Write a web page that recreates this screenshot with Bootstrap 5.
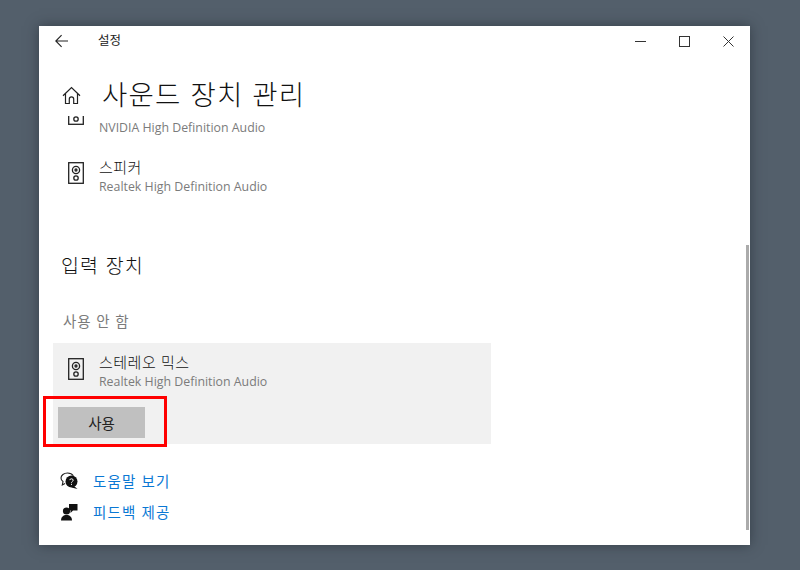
<!DOCTYPE html>
<html lang="ko">
<head>
<meta charset="utf-8">
<title>설정</title>
<link href="https://cdn.jsdelivr.net/npm/bootstrap@5.3.0/dist/css/bootstrap.min.css" rel="stylesheet">
<style>
html,body{height:100%;overflow:hidden}
body{background:#535f6b;font-family:"Open Sans","Noto Sans CJK KR",sans-serif;color:#1a1a1a;padding:26px 50px 25px 39px}
.win{width:711px;height:519px;background:#fff;box-shadow:0 0 12px rgba(30,36,44,.55);position:relative}
.tbar{height:30px;padding-left:16px}
.tbar-title{font-size:12.5px;margin-left:29px;color:#222;line-height:30px;font-weight:400}
.wbtn{width:44px;height:30px}
.head{height:60px;padding:19px 0 5px 23px}
.head h1{font-size:27.5px;font-weight:300;margin:0 0 0 21px;letter-spacing:1.2px;line-height:36px;color:#111;font-family:"Noto Sans CJK KR",sans-serif}
.scroller{height:429px;overflow:hidden;position:relative}
.dev{height:59px;padding-left:29px;gap:15px}
.dev svg{margin-bottom:7px}
.dev-first{margin-top:-28px}
.name-gap{height:20px}
.dev-name{font-size:15px;line-height:20px;color:#111;font-weight:300;letter-spacing:.5px;font-family:"Noto Sans CJK KR",sans-serif}
.dev-sub{font-size:12.35px;line-height:20px;color:#7b7b7b}
.sect{font-size:19.5px;line-height:28px;margin:45px 0 0 22px;font-weight:300;color:#111;letter-spacing:1.1px;font-family:"Noto Sans CJK KR",sans-serif}
.state{font-size:14.5px;line-height:20px;margin:32px 0 0 24px;color:#7b7b7b;letter-spacing:.8px;font-family:"Noto Sans CJK KR",sans-serif}
.panel{width:438px;height:101px;margin:12px 0 0 14px;background:#f1f1f1;position:relative}
.panel .dev{height:auto;padding:9px 0 0 15px}
.use-btn{width:87px;height:31px;margin:15px 0 0 5px;background:#c0c0c0;border:0;border-radius:0;font-size:14.5px;padding:0;color:#222;font-family:"Noto Sans CJK KR",sans-serif}
.use-btn:hover{background:#c0c0c0;color:#222}
.redbox{position:absolute;left:-10px;top:53px;width:124px;height:51px;border:3px solid #f00;pointer-events:none}
.links{margin:27px 0 0 21px;gap:11px}
.hlink{font-size:14.5px;line-height:20px;color:#0a78d4;text-decoration:none;letter-spacing:1.1px;font-family:"Noto Sans CJK KR",sans-serif}
.link-row{gap:14px}
.sbar{position:absolute;right:1px;top:129px;width:3px;height:285px;background:#ababab}
</style>
</head>
<body>
<div class="win d-flex flex-column">
  <div class="tbar d-flex align-items-center">
    <svg width="14" height="14" viewBox="0 0 14 14" fill="none" stroke="#222" stroke-width="1.1"><path d="M.8 7H13M6.6 1.2.8 7l5.8 5.8"/></svg>
    <span class="tbar-title">설정</span>
    <div class="d-flex ms-auto">
      <div class="wbtn d-flex align-items-center justify-content-center"><svg width="11" height="11" viewBox="0 0 11 11" stroke="#333"><path d="M0 5.500H11"/></svg></div>
      <div class="wbtn d-flex align-items-center justify-content-center"><svg width="11" height="11" viewBox="0 0 11 11" fill="none" stroke="#333"><rect x=".5" y=".5" width="10" height="10"/></svg></div>
      <div class="wbtn d-flex align-items-center justify-content-center"><svg width="11" height="11" viewBox="0 0 11 11" fill="none" stroke="#333"><path d="M.5.500 10.500 10.500M10.500.500 .5 10.500"/></svg></div>
    </div>
  </div>
  <div class="head d-flex align-items-center">
    <svg width="19" height="19" viewBox="0 0 19 19" fill="none" stroke="#222" stroke-width="1.2" class="mt-1"><path d="M1 9.800 9.500 1.500 18 9.800M3.500 7.500V17.500H7.300V13a2.200 2.200 0 0 1 4.400 0V17.500H15.500V7.500"/></svg>
    <h1>사운드 장치 관리</h1>
  </div>
  <div class="scroller">
    <div class="dev dev-first d-flex align-items-center">
      <svg width="16" height="22" viewBox="0 0 16 22" fill="none" stroke="#222" stroke-width="1.3"><rect x=".7" y=".7" width="14.6" height="20.6"/><circle cx="8" cy="8" r="3.600"/><circle cx="8" cy="8" r="1"/><circle cx="8" cy="16" r="2.200"/></svg>
      <div><div class="name-gap"></div><div class="dev-sub">NVIDIA High Definition Audio</div></div>
    </div>
    <div class="dev d-flex align-items-center">
      <svg width="16" height="22" viewBox="0 0 16 22" fill="none" stroke="#222" stroke-width="1.3"><rect x=".7" y=".7" width="14.6" height="20.6"/><circle cx="8" cy="8" r="3.600"/><circle cx="8" cy="8" r="1"/><circle cx="8" cy="16" r="2.200"/></svg>
      <div><div class="dev-name">스피커</div><div class="dev-sub">Realtek High Definition Audio</div></div>
    </div>
    <h2 class="sect">입력 장치</h2>
    <div class="state">사용 안 함</div>
    <div class="panel">
      <div class="dev d-flex align-items-center">
        <svg width="16" height="22" viewBox="0 0 16 22" fill="none" stroke="#222" stroke-width="1.3"><rect x=".7" y=".7" width="14.6" height="20.6"/><circle cx="8" cy="8" r="3.600"/><circle cx="8" cy="8" r="1"/><circle cx="8" cy="16" r="2.200"/></svg>
        <div><div class="dev-name">스테레오 믹스</div><div class="dev-sub">Realtek High Definition Audio</div></div>
      </div>
      <button class="btn use-btn d-block" type="button">사용</button>
      <div class="redbox"></div>
    </div>
    <div class="links d-flex flex-column">
      <div class="link-row d-flex align-items-center">
        <svg width="19" height="18" viewBox="0 0 19 18"><path d="M5 11.500 2.300 13 3 9.500C1.700 8.600 1 7.400 1 6c0-2.800 2.900-5 6.500-5 2.600 0 4.800 1.100 5.900 2.800" fill="none" stroke="#222" stroke-width="1.100"/><circle cx="11.500" cy="9.500" r="6" fill="#111"/><path d="m14 14 3.500 3-6-1.500z" fill="#111"/><path d="M9.700 8.100c.2-1.800 3.500-1.700 3.500.1 0 1.200-1.700 1.300-1.700 2.500M11.500 11.800v1.100" fill="none" stroke="#fff" stroke-width="1"/></svg>
        <a class="hlink" href="#">도움말 보기</a>
      </div>
      <div class="link-row d-flex align-items-center">
        <svg width="19" height="18" viewBox="0 0 19 18" fill="#111"><circle cx="6.500" cy="8" r="3.600"/><path d="M1 17.500c0-3.600 2.300-5.500 5.500-5.500s5.500 1.900 5.500 5.500z"/><path d="M9 1h8.500v6.500H13L10.500 10V7.200H9z"/></svg>
        <a class="hlink" href="#">피드백 제공</a>
      </div>
    </div>
    <div class="sbar"></div>
  </div>
</div>
</body>
</html>
